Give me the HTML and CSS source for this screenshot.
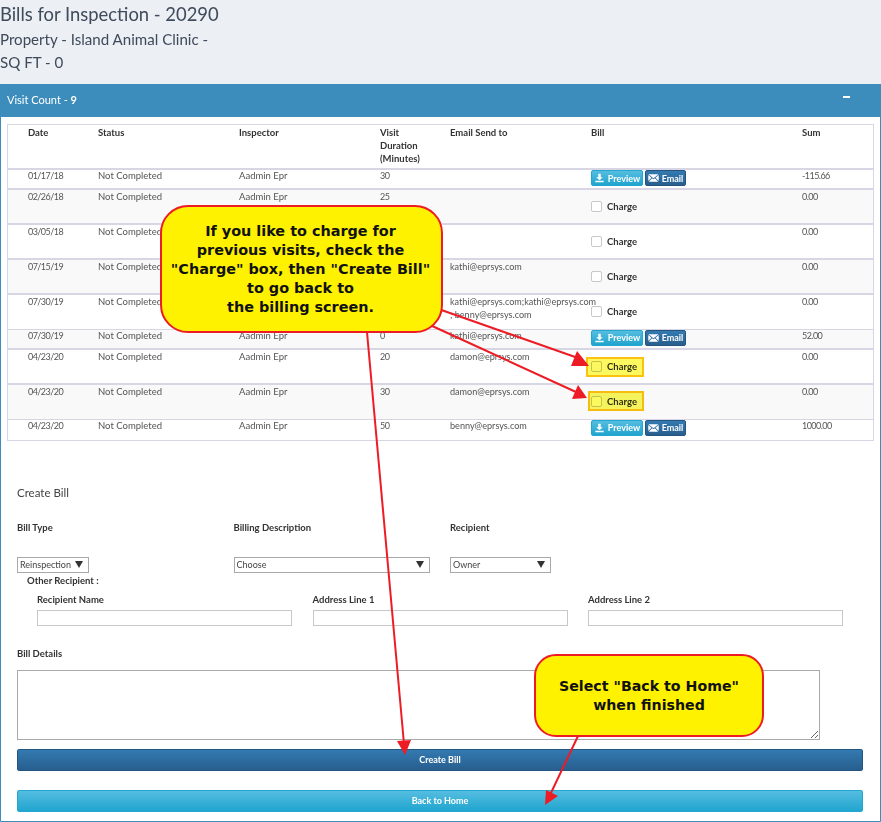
FILE: index.html
```html
<!DOCTYPE html>
<html lang="en">
<head>
<meta charset="utf-8">
<title>Bills for Inspection</title>
<link rel="stylesheet" href="styles.css">
</head>
<body>
<header class="page-head">
  <h1>Bills for Inspection - 20290</h1>
  <h2>Property - Island Animal Clinic -</h2>
  <h2>SQ FT - 0</h2>
</header>
<section class="panel">
  <div class="panel-head"><span>Visit Count - <b>9</b></span><span class="collapse"></span></div>
  <div class="panel-body">
    <table class="visits">
      <thead>
        <tr>
          <th class="c-gap"></th><th class="c-date">Date</th><th class="c-status">Status</th><th class="c-insp">Inspector</th><th class="c-dur">Visit<br>Duration<br>(Minutes)</th><th class="c-email">Email Send to</th><th class="c-bill">Bill</th><th class="c-sum">Sum</th>
        </tr>
      </thead>
      <tbody>
        <tr class="r-btn"><td></td><td>01/17/18</td><td>Not Completed</td><td>Aadmin Epr</td><td>30</td><td></td><td><div class="actions"><a class="btn btn-info"><svg viewBox="0 0 12 12" class="ico"><path d="M4.500 1h3v4H10L6 8.600 2 5h2.500zM1 9.200h10V11H1z"/></svg>Preview</a><a class="btn btn-primary"><svg viewBox="0 0 12 10" class="ico"><path d="M.5.800h11L6 5.200zM.3 1.800 3.800 4.600.3 8.400zM11.700 1.800 8.200 4.600l3.500 3.800zM4.500 5.200 6 6.400l1.500-1.200 3.700 4H.8z"/></svg>Email</a></div></td><td>-115.66</td></tr>
        <tr class="r-chk"><td></td><td>02/26/18</td><td>Not Completed</td><td>Aadmin Epr</td><td>25</td><td></td><td><label class="charge"><span class="box"></span>Charge</label></td><td>0.00</td></tr>
        <tr class="r-chk"><td></td><td>03/05/18</td><td>Not Completed</td><td>Aadmin Epr</td><td>0</td><td></td><td><label class="charge"><span class="box"></span>Charge</label></td><td>0.00</td></tr>
        <tr class="r-chk"><td></td><td>07/15/19</td><td>Not Completed</td><td>Aadmin Epr</td><td>0</td><td>kathi@eprsys.com</td><td><label class="charge"><span class="box"></span>Charge</label></td><td>0.00</td></tr>
        <tr class="r-chk"><td></td><td>07/30/19</td><td>Not Completed</td><td>Aadmin Epr</td><td>0</td><td class="wide">kathi@eprsys.com;kathi@eprsys.com<br>; benny@eprsys.com</td><td><label class="charge"><span class="box"></span>Charge</label></td><td>0.00</td></tr>
        <tr class="r-btn"><td></td><td>07/30/19</td><td>Not Completed</td><td>Aadmin Epr</td><td>0</td><td>kathi@eprsys.com</td><td><div class="actions"><a class="btn btn-info"><svg viewBox="0 0 12 12" class="ico"><path d="M4.500 1h3v4H10L6 8.600 2 5h2.500zM1 9.200h10V11H1z"/></svg>Preview</a><a class="btn btn-primary"><svg viewBox="0 0 12 10" class="ico"><path d="M.5.800h11L6 5.200zM.3 1.800 3.800 4.600.3 8.400zM11.700 1.800 8.200 4.600l3.500 3.800zM4.500 5.200 6 6.400l1.500-1.200 3.700 4H.8z"/></svg>Email</a></div></td><td>52.00</td></tr>
        <tr class="r-chk"><td></td><td>04/23/20</td><td>Not Completed</td><td>Aadmin Epr</td><td>20</td><td>damon@eprsys.com</td><td><label class="charge"><span class="box"></span>Charge</label></td><td>0.00</td></tr>
        <tr class="r-chk"><td></td><td>04/23/20</td><td>Not Completed</td><td>Aadmin Epr</td><td>30</td><td>damon@eprsys.com</td><td><label class="charge"><span class="box"></span>Charge</label></td><td>0.00</td></tr>
        <tr class="r-btn r-last"><td></td><td>04/23/20</td><td>Not Completed</td><td>Aadmin Epr</td><td>50</td><td>benny@eprsys.com</td><td><div class="actions"><a class="btn btn-info"><svg viewBox="0 0 12 12" class="ico"><path d="M4.500 1h3v4H10L6 8.600 2 5h2.500zM1 9.200h10V11H1z"/></svg>Preview</a><a class="btn btn-primary"><svg viewBox="0 0 12 10" class="ico"><path d="M.5.800h11L6 5.200zM.3 1.800 3.800 4.600.3 8.400zM11.700 1.800 8.200 4.600l3.500 3.800zM4.500 5.200 6 6.400l1.500-1.200 3.700 4H.8z"/></svg>Email</a></div></td><td>1000.00</td></tr>
      </tbody>
    </table>

    <form class="bill-form">
      <h3>Create Bill</h3>
      <div class="select-row">
        <div class="field"><label>Bill Type</label><div class="select s-type">Reinspection</div></div>
        <div class="field"><label>Billing Description</label><div class="select s-desc">Choose</div></div>
        <div class="field"><label>Recipient</label><div class="select s-rec">Owner</div></div>
      </div>
      <div class="other-title">Other Recipient :</div>
      <div class="other-row">
        <div class="other"><label>Recipient Name</label><input type="text"></div>
        <div class="other"><label>Address Line 1</label><input type="text"></div>
        <div class="other"><label>Address Line 2</label><input type="text"></div>
      </div>
      <label class="details-label">Bill Details</label>
      <textarea class="details"></textarea>
      <button type="button" class="wide-btn btn-primary">Create Bill</button>
      <button type="button" class="wide-btn btn-info back">Back to Home</button>
    </form>
  </div>
</section>

<div class="highlight h1"></div>
<div class="highlight h2"></div>
<svg class="arrows" viewBox="0 0 881 822" width="881" height="822">
  <g stroke="#ed1c24" stroke-width="2" fill="none">
    <path d="M430 306 578 358"/>
    <path d="M430 325 576 392"/>
    <path d="M367 332 404 744"/>
    <path d="M578 736 550 795"/>
  </g>
  <g fill="#ed1c24">
    <path d="M589 366 571 366 577 351z"/>
    <path d="M587 398 572 399 578 385z"/>
    <path d="M405 755 397 741 411 740z"/>
    <path d="M545 805 546 790 558 796z"/>
  </g>
</svg>
<div class="callout c1">If you like to charge for<br>previous visits, check the<br>"Charge" box, then "Create Bill"<br>to go back to<br>the billing screen.</div>
<div class="callout c2">Select "Back to Home"<br>when finished</div>
</body>
</html>
```
FILE: styles.css
```css
* { box-sizing: border-box; }
html, body { margin: 0; padding: 0; }
body {
  width: 881px;
  height: 822px;
  overflow: hidden;
  position: relative;
  background: #eceff4;
  font-family: Lato, "Noto Sans", sans-serif;
  font-size: 9.500px;
  color: #444;
}
.page-head { height: 84px; padding-top: 2px; color: #3f4a5a; }
.page-head h1 { margin: 0 0 2px; font-size: 18.400px; font-weight: 400; line-height: 24px; }
.page-head h2 { margin: 0; font-size: 15.100px; font-weight: 400; line-height: 23px; }
.panel { height: 738px; background: #fff; border: 1px solid #3c8dbc; border-radius: 2px 2px 0 0; }
.panel-head {
  height: 33px;
  margin: -1px -1px 0;
  background: #3c8dbc;
  color: #fff;
  font-size: 11px;
  padding: 0 31px 3px 7px;
  display: flex;
  align-items: center;
  justify-content: space-between;
}
.collapse { width: 7px; height: 2px; background: #fff; margin-bottom: 4px; }
.panel-body { padding: 7px 7px 0 6px; }
.visits {
  width: 865.500px;
  table-layout: fixed;
  border-collapse: collapse;
  border: 1px solid #d8d6e4;
}
.visits th {
  text-align: left;
  vertical-align: top;
  font-weight: 700;
  color: #333;
  padding: 1px 0 3px;
  line-height: 13px;
  border-bottom: 2px solid #d8d6e4;
}
.visits td {
  vertical-align: top;
  padding: 0;
  line-height: 13px;
  border-top: 1px solid #d8d6e4;
  color: #555;
}
.visits tr:nth-child(even) td { background: #f9f9f9; }
.visits td:nth-child(2), .visits td:nth-child(5), .visits td:nth-child(8) { font-size: 9px; letter-spacing: -.55px; }
.visits td:nth-child(6) { font-size: 9.100px; }
.c-gap { width: 20.500px; }
.c-date { width: 70px; }
.c-status { width: 141px; }
.c-insp { width: 141px; }
.c-dur { width: 70px; }
.c-email { width: 141px; }
.c-bill { width: 211px; }
.c-sum { width: 71px; }
.r-btn td { height: 20px; line-height: 11px; }
.r-last td { height: 21px; }
.r-chk td { height: 35px; border-top-width: 2px; }
.wide { white-space: nowrap; }
.actions { display: flex; gap: 2px; }
.btn { display: inline-flex; align-items: center; justify-content: center; height: 16px; color: #fff; font-weight: 700; border-radius: 2px; font-size: 9px; }
.btn-info { background: linear-gradient(#55bde0, #20a5cf); border: 1px solid #22a7d0; }
.btn-primary { background: linear-gradient(#337ab1, #285e8e); border: 1px solid #245580; }
.actions .btn-info { width: 52px; }
.actions .btn-primary { width: 41px; }
.ico { width: 11px; height: 10px; fill: #fff; margin-right: 3px; flex: none; }
.charge { display: flex; align-items: center; gap: 5px; height: 33px; font-weight: 700; color: #333; padding-bottom: 1px; }
.box { width: 11px; height: 11px; border: 1px solid #c8c8c8; border-radius: 2px; background: #fff; flex: none; }
.bill-form { padding: 0 0 0 10px; }
.bill-form h3 { margin: 44px 0 0; font-size: 11.500px; font-weight: 400; color: #444; line-height: 16px; }
.bill-form label { font-weight: 700; color: #333; display: block; line-height: 12px; }
.select-row { display: flex; margin-top: 21px; }
.field { width: 216.500px; }
.select {
  position: relative;
  margin-top: 23px;
  height: 16px;
  border: 1px solid #a9a9a9;
  background: #fff;
  line-height: 14px;
  padding-left: 2px;
  font-size: 9px;
  color: #444;
}
.select::after {
  content: "";
  position: absolute;
  right: 5px;
  top: 3px;
  border-style: solid;
  border-width: 7px 4px 0;
  border-color: #333 transparent transparent;
}
.s-type { width: 72px; }
.s-desc { width: 196px; }
.s-rec { width: 101px; }
.other-title { margin: 2px 0 0 10px; font-weight: 700; color: #333; line-height: 12px; }
.other-row { display: flex; gap: 20.500px; margin: 7px 0 0 20px; }
.other { width: 255px; }
.other input { display: block; width: 100%; height: 16px; margin-top: 4px; border: 1px solid #c8c8c8; background: #fff; padding: 0; }
.bill-form .details-label { margin-top: 22px; }
.details { display: block; width: 803px; height: 70px; margin-top: 10px; border: 1px solid #a9a9a9; background: #fff; padding: 0; }
.wide-btn { display: block; width: 846px; height: 22px; color: #fff; font: 700 9px Lato, sans-serif; border-radius: 2px; padding: 0; }
.details + .wide-btn { margin-top: 9px; }
.back { margin-top: 19px; }

.highlight { position: absolute; background: #fbf95f; border: 2px solid #fdc20e; mix-blend-mode: multiply; }
.highlight.h1 { left: 586px; top: 357px; width: 58px; height: 20px; }
.highlight.h2 { left: 588px; top: 391px; width: 56px; height: 20px; }
.arrows { position: absolute; left: 0; top: 0; }
.callout {
  position: absolute;
  background: #fff200;
  border: 2px solid #ed1c24;
  text-align: center;
  font-family: "DejaVu Sans", sans-serif;
  font-weight: 700;
  color: #111;
  font-size: 14.400px;
  line-height: 19px;
  display: flex;
  align-items: center;
  justify-content: center;
}
.c1 { left: 160px; top: 205px; width: 283px; height: 128px; border-radius: 28px; padding-right: 2px; }
.c2 { left: 534px; top: 654px; width: 230px; height: 83px; border-radius: 22px; font-size: 14.200px; }
```
